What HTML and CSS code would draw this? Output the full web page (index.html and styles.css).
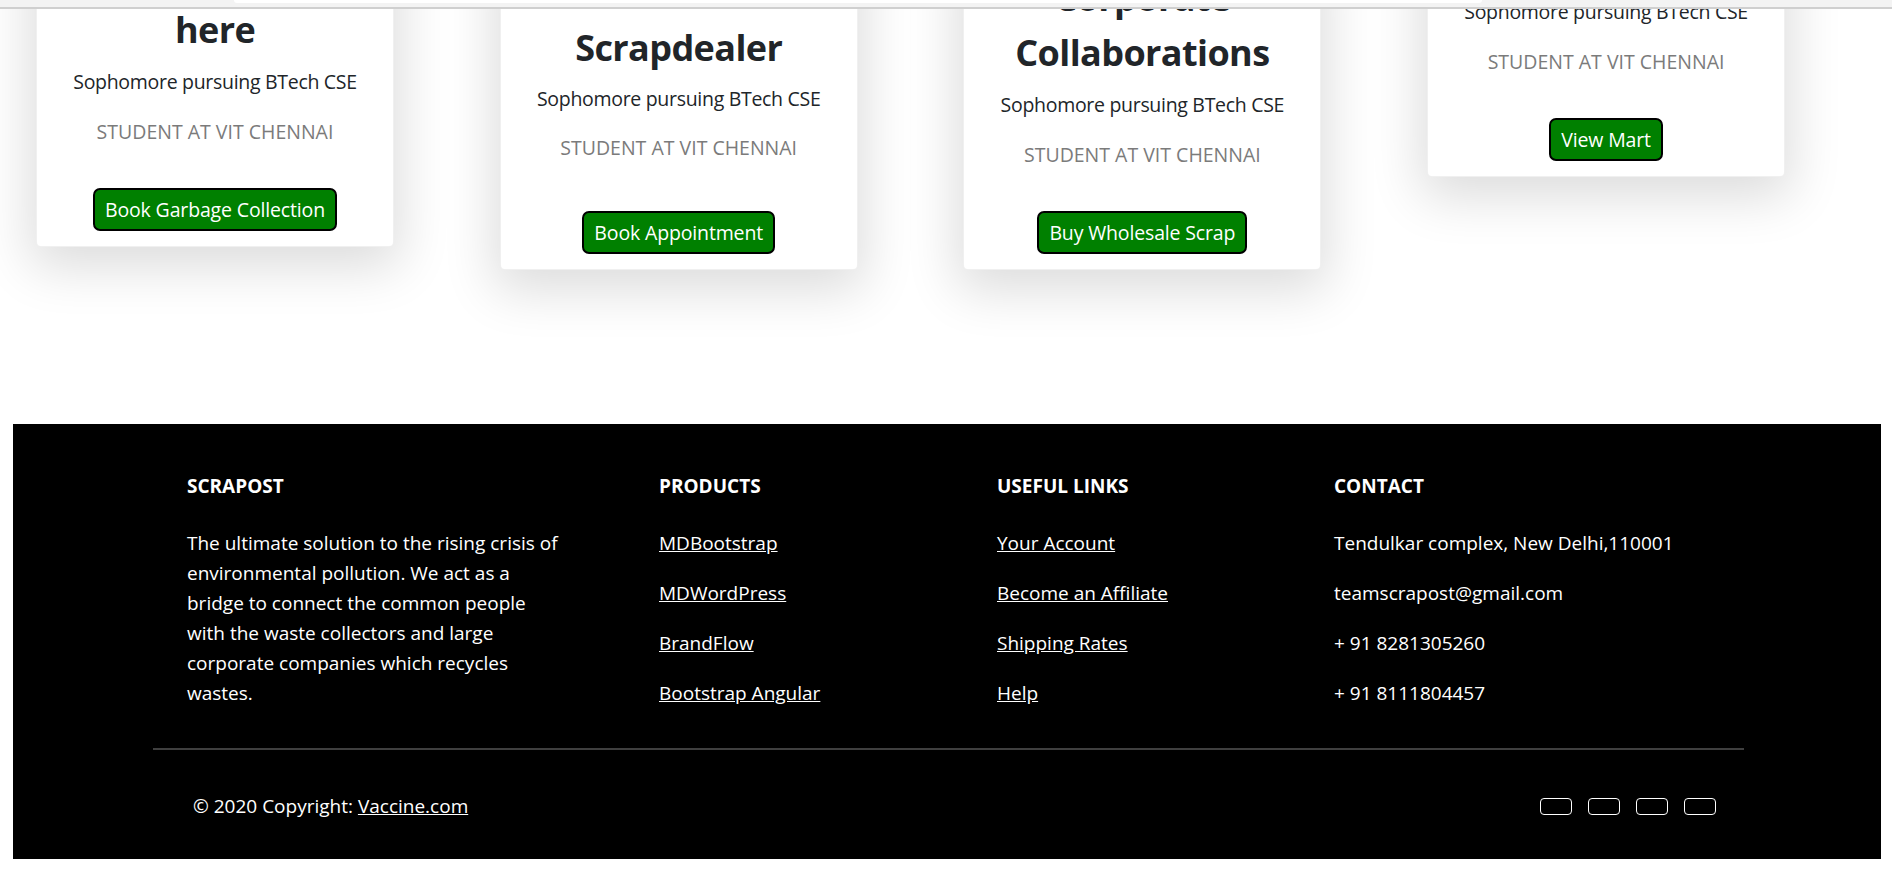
FILE: index.html
```html
<!DOCTYPE html>
<html lang="en">
<head>
<meta charset="utf-8">
<title>Scrapost</title>
<link rel="stylesheet" href="styles.css">
</head>
<body>
<div class="topbar"><div class="topbar-pill"></div></div>

<main>
  <section class="cards">
    <article class="card card--low">
      <h3 class="card-title">Sell your garbage<br>here</h3>
      <p class="card-text">Sophomore pursuing BTech CSE</p>
      <p class="card-muted">STUDENT AT VIT CHENNAI</p>
      <a class="btn" href="#">Book Garbage Collection</a>
    </article>
    <article class="card card--loose">
      <h3 class="card-title">Become a<br>Scrapdealer</h3>
      <p class="card-text">Sophomore pursuing BTech CSE</p>
      <p class="card-muted">STUDENT AT VIT CHENNAI</p>
      <a class="btn" href="#">Book Appointment</a>
    </article>
    <article class="card">
      <h3 class="card-title">Corporate<br>Collaborations</h3>
      <p class="card-text">Sophomore pursuing BTech CSE</p>
      <p class="card-muted">STUDENT AT VIT CHENNAI</p>
      <a class="btn" href="#">Buy Wholesale Scrap</a>
    </article>
    <article class="card card--lowest">
      <h3 class="card-title">Scrap Mart</h3>
      <p class="card-text">Sophomore pursuing BTech CSE</p>
      <p class="card-muted">STUDENT AT VIT CHENNAI</p>
      <a class="btn" href="#">View Mart</a>
    </article>
  </section>
</main>

<footer class="footer">
  <div class="footer-container">
    <div class="footer-grid">
      <div class="footer-col">
        <h6 class="footer-heading">Scrapost</h6>
        <p class="footer-text">The ultimate solution to the rising crisis of<br>environmental pollution. We act as a<br>bridge to connect the common people<br>with the waste collectors and large<br>corporate companies which recycles<br>wastes.</p>
      </div>
      <div class="footer-col">
        <h6 class="footer-heading">Products</h6>
        <p class="footer-text"><a href="#">MDBootstrap</a></p>
        <p class="footer-text"><a href="#">MDWordPress</a></p>
        <p class="footer-text"><a href="#">BrandFlow</a></p>
        <p class="footer-text"><a href="#">Bootstrap Angular</a></p>
      </div>
      <div class="footer-col">
        <h6 class="footer-heading">Useful links</h6>
        <p class="footer-text"><a href="#">Your Account</a></p>
        <p class="footer-text"><a href="#">Become an Affiliate</a></p>
        <p class="footer-text"><a href="#">Shipping Rates</a></p>
        <p class="footer-text"><a href="#">Help</a></p>
      </div>
      <div class="footer-col">
        <h6 class="footer-heading">Contact</h6>
        <p class="footer-text">Tendulkar complex, New Delhi,110001</p>
        <p class="footer-text">teamscrapost@gmail.com</p>
        <p class="footer-text">+ 91 8281305260</p>
        <p class="footer-text">+ 91 8111804457</p>
      </div>
    </div>

    <hr class="footer-rule">

    <div class="footer-bottom">
      <div class="copyright">© 2020 Copyright: <a href="#">Vaccine.com</a></div>
      <div class="social">
        <a class="social-btn" href="#" aria-label="Facebook"></a>
        <a class="social-btn" href="#" aria-label="Twitter"></a>
        <a class="social-btn" href="#" aria-label="Google"></a>
        <a class="social-btn" href="#" aria-label="LinkedIn"></a>
      </div>
    </div>
  </div>
</footer>
</body>
</html>
```
FILE: styles.css
```css
* {
  box-sizing: border-box;
}

html,
body {
  margin: 0;
  padding: 0;
  background: #ffffff;
}

body {
  font-family: "Open Sans", "Noto Sans", "Liberation Sans", Arial, sans-serif;
  color: #212529;
}

/* fixed strip at the very top (bottom edge of the browser chrome / navbar) */
.topbar {
  position: fixed;
  top: 0;
  left: 0;
  right: 0;
  height: 9px;
  background: #f3f3f3;
  border-bottom: 2px solid #cfcfcf;
  z-index: 10;
}

.topbar-pill {
  margin-left: 234px;
  width: 1248px;
  height: 3px;
  background: #ffffff;
  border-radius: 0 0 5px 5px;
}

.cards {
  height: 270px;
  display: flex;
  align-items: flex-end;
  gap: 105.7px;
  padding-left: 36px;
}

.card {
  flex: 0 0 358px;
  background: #ffffff;
  border: 1px solid rgba(0, 0, 0, 0.06);
  border-radius: 5px;
  box-shadow: 0 14px 52px 6px rgba(0, 0, 0, 0.14);
  text-align: center;
  padding: 20px 16px 15px;
}

.card--low {
  margin-bottom: 23px;
}

.card--lowest {
  margin-bottom: 93px;
}

.card-title {
  margin: 0 0 10px;
  font-size: 36px;
  line-height: 55px;
  font-weight: 700;
  letter-spacing: -0.6px;
  color: #212529;
}

.card-text {
  margin: 0 0 20px;
  font-size: 19.5px;
  line-height: 30px;
  letter-spacing: -0.3px;
  color: #212529;
}

.card-muted {
  margin: 0 0 41px;
  font-size: 19.5px;
  line-height: 30px;
  color: #7b7b7b;
}

.card--loose .card-title {
  margin-bottom: 9px;
}

.card--loose .card-text {
  margin-bottom: 19px;
}

.card--loose .card-muted {
  margin-bottom: 48px;
}

.btn {
  display: inline-block;
  padding: 5px 10px 4px;
  border: 2px solid #000000;
  border-radius: 7px;
  background: #008000;
  color: #ffffff;
  font-size: 19.5px;
  line-height: 30px;
  letter-spacing: -0.15px;
  text-decoration: none;
  vertical-align: top;
}

/* footer */
.footer {
  margin: 154px 11px 0 13px;
  background: #000000;
  color: #ffffff;
  padding-top: 47px;
}

.footer-container {
  padding: 0 137px 0 140px;
}

.footer-grid {
  display: grid;
  grid-template-columns: 472px 338px 337px 1fr;
  padding-left: 34px;
}

.footer-heading {
  margin: 0 0 27px;
  font-size: 19px;
  line-height: 30px;
  font-weight: 700;
  text-transform: uppercase;
}

.footer-text {
  margin: 0 0 20px;
  font-size: 19px;
  line-height: 30px;
  white-space: nowrap;
}

.footer a {
  color: #ffffff;
  text-decoration: underline;
}

.footer-rule {
  margin: 20px 0 0;
  border: 0;
  height: 2px;
  background: #3f3f3f;
}

.footer-bottom {
  display: flex;
  justify-content: space-between;
  align-items: center;
  padding: 41px 28px 38px 40px;
}

.copyright {
  font-size: 19px;
  line-height: 30px;
}

.social {
  display: flex;
  gap: 16px;
}

.social-btn {
  display: block;
  width: 32px;
  height: 17px;
  border: 1px solid #ffffff;
  border-radius: 4px;
}
```
